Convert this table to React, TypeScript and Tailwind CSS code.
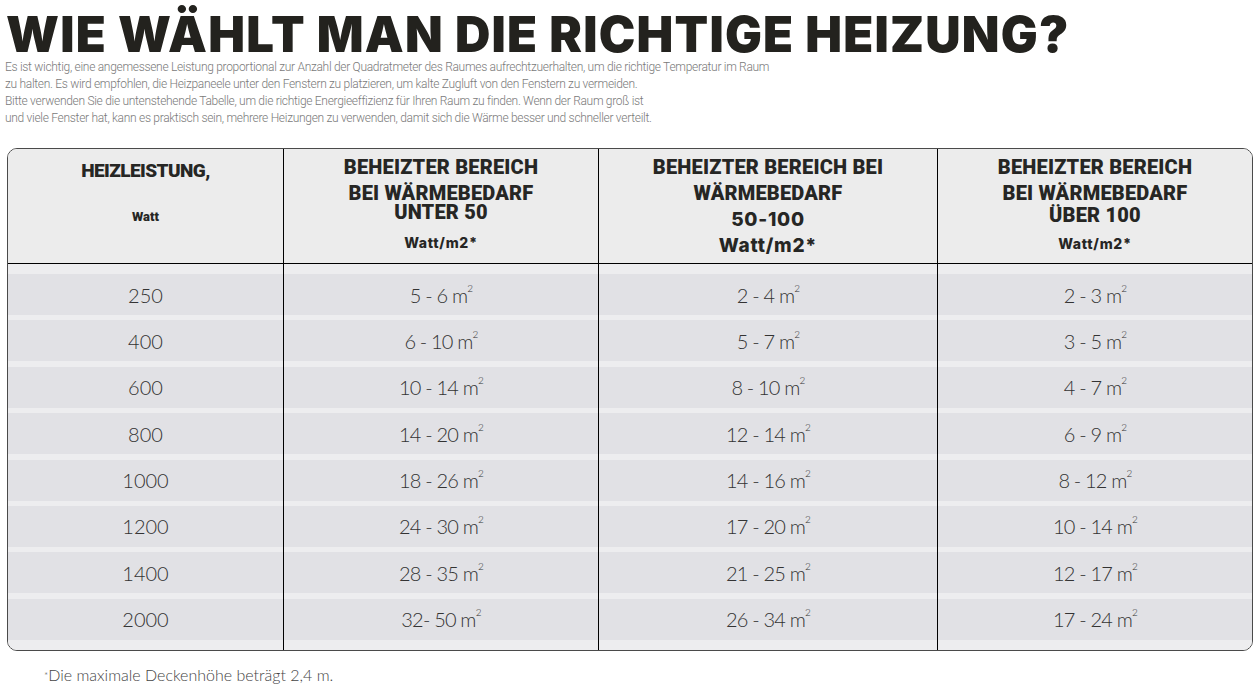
const rows: [string, string, string, string][] = [
  ["250", "5 - 6", "2 - 4", "2 - 3"],
  ["400", "6 - 10", "5 - 7", "3 - 5"],
  ["600", "10 - 14", "8 - 10", "4 - 7"],
  ["800", "14 - 20", "12 - 14", "6 - 9"],
  ["1000", "18 - 26", "14 - 16", "8 - 12"],
  ["1200", "24 - 30", "17 - 20", "10 - 14"],
  ["1400", "28 - 35", "21 - 25", "12 - 17"],
  ["2000", "32- 50", "26 - 34", "17 - 24"],
];

const Area = ({ v }: { v: string }) => (
  <span className="tracking-[-0.04em]">
    {v} m<span className="text-[10px] align-top relative top-[1px]">2</span>
  </span>
);

const cols = "grid grid-cols-[276px_315px_339px_1fr]";

export default function App() {
  return (
    <div className="w-[1258px] h-[690px] bg-white overflow-hidden text-[#2a2a28]">
      {/* Title */}
      <h1
        className="pt-[10px] pl-[6px] h-[59px] text-[49px] leading-none font-black tracking-[0.025em] text-[#23221e] whitespace-nowrap"
        style={{ fontFamily: "Inter, sans-serif" }}
      >
        WIE WÄHLT MAN DIE RICHTIGE HEIZUNG?
      </h1>

      {/* Intro */}
      <div
        className="pl-[5px] text-[12px] leading-[17px] font-light tracking-[-0.025em] text-[#7a7a7a]"
        style={{ fontFamily: "Roboto, sans-serif" }}
      >
        <p>
          Es ist wichtig, eine angemessene Leistung proportional zur Anzahl der Quadratmeter des Raumes aufrechtzuerhalten, um die richtige Temperatur im Raum
        </p>
        <p>
          zu halten. Es wird empfohlen, die Heizpaneele unter den Fenstern zu platzieren, um kalte Zugluft von den Fenstern zu vermeiden.
        </p>
        <p>
          Bitte verwenden Sie die untenstehende Tabelle, um die richtige Energieeffizienz für Ihren Raum zu finden. Wenn der Raum groß ist
        </p>
        <p>
          und viele Fenster hat, kann es praktisch sein, mehrere Heizungen zu verwenden, damit sich die Wärme besser und schneller verteilt.
        </p>
      </div>

      {/* Table */}
      <div className="mt-[21px] ml-[7px] w-[1246px] rounded-[10px] border border-[#4a4a4a] overflow-hidden">
        <div
          className={`${cols} h-[115px] bg-[#ececec] border-b border-black text-[#262624]`}
          style={{ fontFamily: "Roboto, sans-serif" }}
        >
          <div className="flex flex-col items-center pt-[10px] border-r border-black">
            <div className="h-[24px] leading-[24px] text-[19px] font-black tracking-[-0.03em]">HEIZLEISTUNG,</div>
            <div className="mt-[22px] h-[24px] leading-[24px] text-[13px] font-black">Watt</div>
          </div>
          <div className="flex flex-col items-center pt-[5px] border-r border-black text-[20px] font-black tracking-[0.01em]">
            <div className="h-[26px] leading-[26px]">BEHEIZTER BEREICH</div>
            <div className="h-[26px] leading-[26px]">BEI WÄRMEBEDARF</div>
            <div className="h-[12px] leading-[12px]">UNTER 50</div>
            <div
              className="mt-[13px] h-[24px] leading-[24px] text-[14px] font-extrabold tracking-[0.05em]"
              style={{ fontFamily: "Inter, sans-serif" }}
            >
              Watt/m2*
            </div>
          </div>
          <div className="flex flex-col items-center pt-[5px] border-r border-black text-[20px] font-black tracking-[0.01em]">
            <div className="h-[26px] leading-[26px]">BEHEIZTER BEREICH BEI</div>
            <div className="h-[26px] leading-[26px]">WÄRMEBEDARF</div>
            <div
              className="h-[28px] leading-[28px] text-[19px] font-extrabold tracking-[0.04em]"
              style={{ fontFamily: "Inter, sans-serif" }}
            >
              50-100
            </div>
            <div
              className="h-[24px] leading-[24px] text-[19px] font-extrabold tracking-[0.04em]"
              style={{ fontFamily: "Inter, sans-serif" }}
            >
              Watt/m2*
            </div>
          </div>
          <div className="flex flex-col items-center pt-[5px] text-[20px] font-black tracking-[0.01em]">
            <div className="h-[26px] leading-[26px]">BEHEIZTER BEREICH</div>
            <div className="h-[26px] leading-[26px]">BEI WÄRMEBEDARF</div>
            <div className="h-[18px] leading-[18px]">ÜBER 100</div>
            <div
              className="mt-[8px] h-[24px] leading-[24px] text-[14px] font-extrabold tracking-[0.05em]"
              style={{ fontFamily: "Inter, sans-serif" }}
            >
              Watt/m2*
            </div>
          </div>
        </div>

        <div
          className={`${cols} bg-[#ededef] text-[20px] font-light text-[#333]`}
          style={{ fontFamily: "Lato, sans-serif" }}
        >
          {[0, 1, 2, 3].map((c) => (
            <div
              key={c}
              className={`flex flex-col gap-[5.4px] pt-[10px] pb-[10px] ${c < 3 ? "border-r border-black" : ""}`}
            >
              {rows.map((r, i) => (
                <div key={i} className="h-[41px] bg-[#e1e1e5] flex items-center justify-center">
                  {c === 0 ? r[0] : <Area v={r[c]} />}
                </div>
              ))}
            </div>
          ))}
        </div>
      </div>

      {/* Footnote */}
      <p
        className="mt-[14px] pl-[44px] text-[16px] leading-[20px] font-light text-[#444]"
        style={{ fontFamily: "Lato, sans-serif" }}
      >
        <span className="text-[10px] align-top">*</span>Die maximale Deckenhöhe beträgt 2,4 m.
      </p>
    </div>
  );
}
